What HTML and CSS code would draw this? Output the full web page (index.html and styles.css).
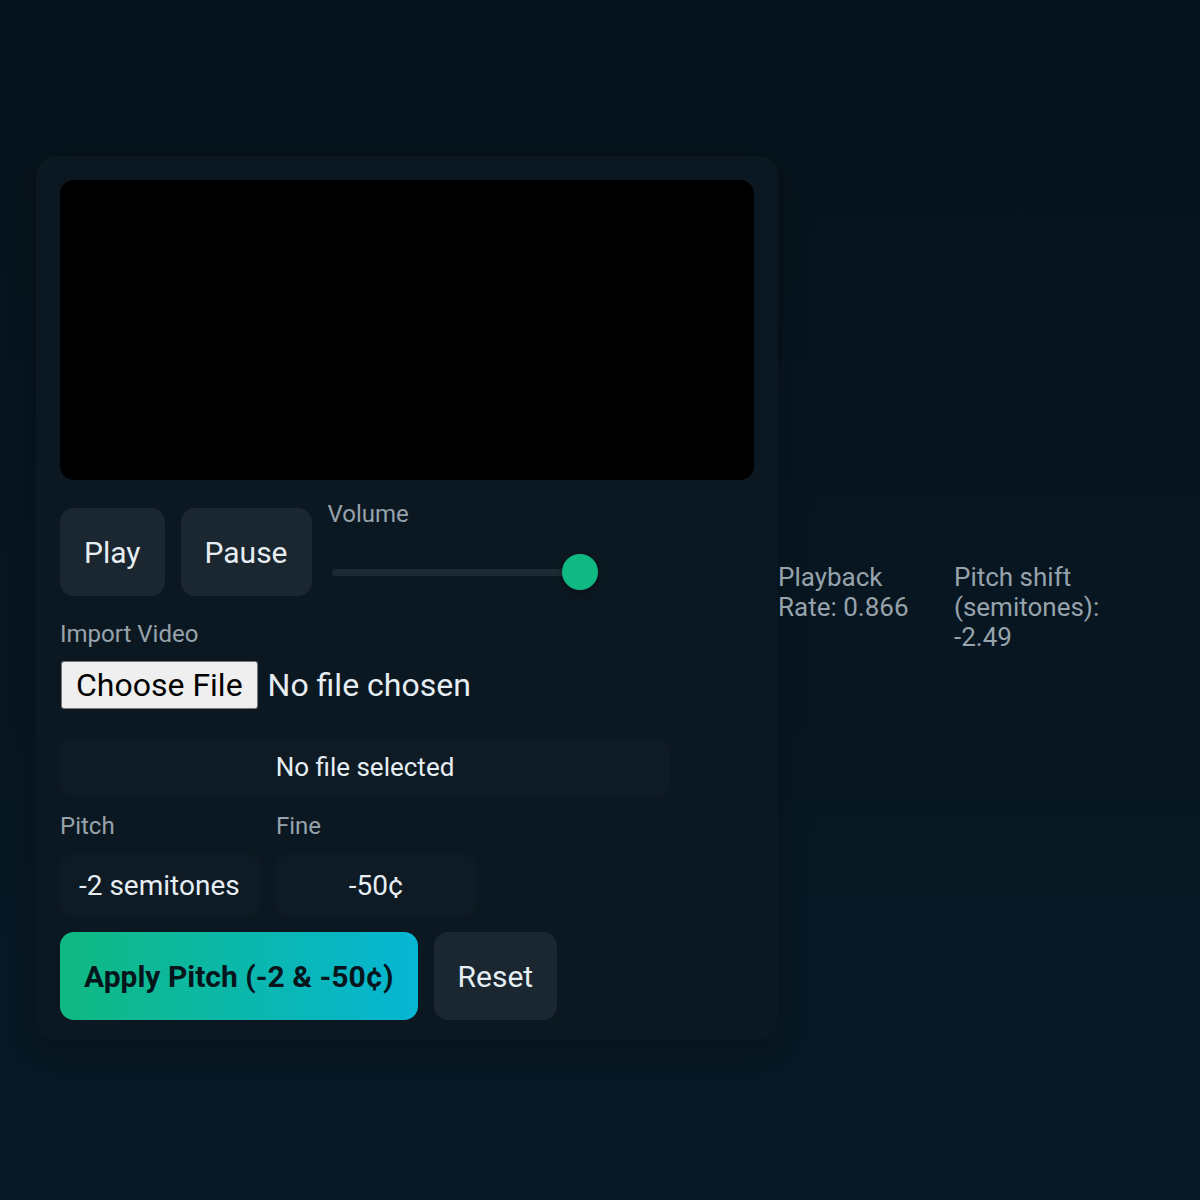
FILE: index.html
```html
<!DOCTYPE html>
<html lang="en">
<head>
    <meta charset="UTF-8">
    <meta name="viewport" content="width=device-width, initial-scale=1.0">
    <title>Pitch Player</title>
    <link rel="stylesheet" href="styles.css">
</head>
<body>
    <div class="app">
        <div class="player-card">
            <div class="video-frame"></div>

            <div class="controls">
                <button class="ctrl-btn" id="playBtn">Play</button>
                <button class="ctrl-btn" id="pauseBtn">Pause</button>
                <div class="volume">
                    <label for="volume">Volume</label>
                    <div class="slider">
                        <div class="slider-track"></div>
                        <div class="slider-thumb"></div>
                    </div>
                </div>
            </div>

            <div class="field import-field">
                <label for="videoFile">Import Video</label>
                <input type="file" id="videoFile" accept="video/*">
            </div>

            <div class="file-name" id="fileName">No file selected</div>

            <div class="pitch-row">
                <div class="field">
                    <label>Pitch</label>
                    <div class="value-box">-2 semitones</div>
                </div>
                <div class="field">
                    <label>Fine</label>
                    <div class="value-box centered">-50¢</div>
                </div>
            </div>

            <div class="actions">
                <button class="apply-btn">Apply Pitch (-2 &amp; -50¢)</button>
                <button class="ctrl-btn">Reset</button>
            </div>
        </div>

        <div class="stats">
            <div class="stat rate">Playback Rate: 0.866</div>
            <div class="stat shift">Pitch shift (semitones): -2.49</div>
        </div>
    </div>
</body>
</html>
```

FILE: styles.css
```css
:root {
    --bg-top: #06121b;
    --bg-bottom: #081a27;
    --card-bg: #0b1821;
    --btn-bg: #1a2630;
    --box-bg: #0e1a24;
    --text-color: #e6eef3;
    --muted-text: #97a3ac;
    --accent: #10b981;
    --accent-2: #06b6d4;
}

body {
    margin: 0;
    min-height: 1200px;
    font-family: Roboto, "Liberation Sans", sans-serif;
    background: linear-gradient(180deg, var(--bg-top), var(--bg-bottom));
    color: var(--text-color);
}

.app {
    display: flex;
    align-items: center;
    padding: 156px 0 0 36px;
}

.player-card {
    width: 742px;
    box-sizing: border-box;
    padding: 24px 24px 20px;
    background: var(--card-bg);
    border-radius: 20px;
    box-shadow: 0 10px 30px rgba(0, 0, 0, 0.25);
}

.video-frame {
    height: 300px;
    background: #000;
    border-radius: 14px;
}

.controls {
    display: flex;
    gap: 16px;
    margin-top: 28px;
}

.ctrl-btn {
    height: 88px;
    padding: 0 24px;
    background: var(--btn-bg);
    color: var(--text-color);
    border: none;
    border-radius: 14px;
    font-family: inherit;
    font-size: 30px;
    cursor: pointer;
}

.volume {
    display: flex;
    flex-direction: column;
    width: 270px;
    margin-top: -8px;
}

.volume label,
.field label {
    font-size: 24px;
    color: var(--muted-text);
    line-height: 28px;
}

.slider {
    position: relative;
    height: 36px;
    margin: 26px 0 0 4px;
}

.slider-track {
    position: absolute;
    left: 0;
    right: 30px;
    top: 15px;
    height: 7px;
    border-radius: 4px;
    background: #1d2a34;
}

.slider-thumb {
    position: absolute;
    left: 230px;
    top: 0;
    width: 36px;
    height: 36px;
    border-radius: 50%;
    background: var(--accent);
    box-shadow: 0 2px 6px rgba(0, 0, 0, 0.3);
}

.field {
    display: flex;
    flex-direction: column;
    gap: 14px;
}

.import-field {
    margin-top: 24px;
    gap: 13px;
}

.field input[type="file"] {
    font-family: inherit;
    font-size: 32px;
    color: var(--text-color);
}

.field input[type="file"]::file-selector-button {
    margin: 0 10px 0 1px;
    padding: 4px 14px;
    font: inherit;
    color: #000;
    background: #efefef;
    border: 1px solid #767676;
    border-radius: 3px;
}

.file-name {
    width: 610px;
    height: 58px;
    margin-top: 29px;
    display: flex;
    align-items: center;
    justify-content: center;
    background: var(--box-bg);
    border-radius: 12px;
    font-size: 26px;
}

.pitch-row {
    display: flex;
    gap: 16px;
    margin-top: 16px;
}

.value-box {
    width: 200px;
    height: 62px;
    box-sizing: border-box;
    padding: 0 19px;
    display: flex;
    align-items: center;
    background: var(--box-bg);
    border-radius: 12px;
    font-size: 28px;
}

.value-box.centered {
    justify-content: center;
}

.actions {
    display: flex;
    gap: 16px;
    margin-top: 16px;
}

.apply-btn {
    height: 88px;
    padding: 0 24px;
    border: none;
    border-radius: 14px;
    background: linear-gradient(90deg, var(--accent), var(--accent-2));
    color: #06141b;
    font-family: inherit;
    font-size: 30px;
    font-weight: 700;
    cursor: pointer;
}

.stats {
    display: flex;
    gap: 26px;
    margin-top: 18px;
    color: var(--muted-text);
    font-size: 26px;
    line-height: 30px;
}

.stat.rate {
    width: 150px;
}

.stat.shift {
    width: 170px;
}
```
